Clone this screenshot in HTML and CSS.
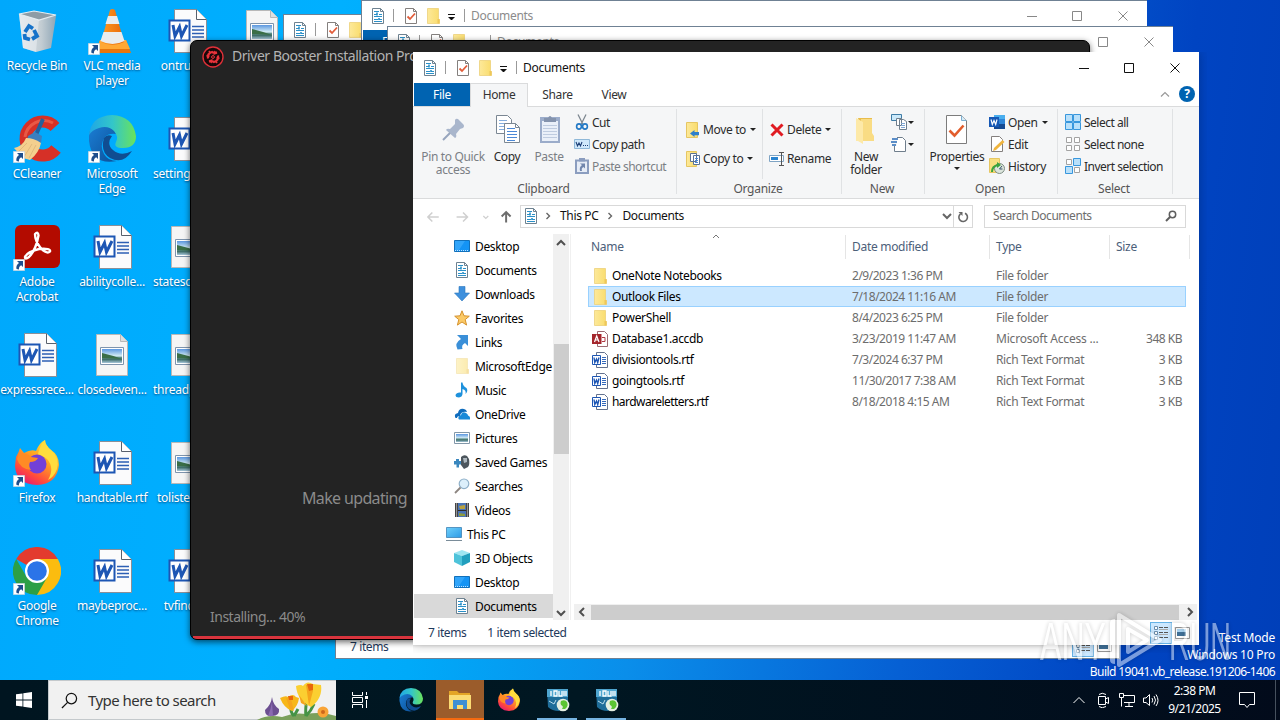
FILE: index.html
```html
<!DOCTYPE html>
<html lang="en">
<head>
	<meta charset="utf-8">
	<title>Desktop</title>
	<link rel="stylesheet" href="styles.css">
</head>
<body>
	<!-- icons -->
	<svg class="sprite" width="0" height="0">
		<defs>
			<linearGradient id="g-edge1" x1="0" y1="0" x2="1" y2="0"><stop offset="0" stop-color="#1fa6e6"/><stop offset=".5" stop-color="#33c6c9"/><stop offset="1" stop-color="#6be35a"/></linearGradient>
			<linearGradient id="g-edge2" x1="0" y1="0" x2="1" y2="1"><stop offset="0" stop-color="#1b7fd6"/><stop offset="1" stop-color="#0c4f97"/></linearGradient>
			<linearGradient id="g-fox" x1=".8" y1="0" x2=".2" y2="1"><stop offset="0" stop-color="#ffec3f"/><stop offset=".4" stop-color="#ffa422"/><stop offset=".75" stop-color="#ff4a3c"/><stop offset="1" stop-color="#e2137c"/></linearGradient>
			<linearGradient id="g-cone" x1="0" y1="0" x2="1" y2="0"><stop offset="0" stop-color="#ff9a20"/><stop offset="1" stop-color="#e8680a"/></linearGradient>
			<linearGradient id="g-bin" x1="0" y1="0" x2="1" y2="0"><stop offset="0" stop-color="#dfe5e8"/><stop offset=".6" stop-color="#c3cdd3"/><stop offset="1" stop-color="#8fa6b6"/></linearGradient>
			<linearGradient id="g-sky" x1="0" y1="0" x2="0" y2="1"><stop offset="0" stop-color="#5b97e0"/><stop offset=".5" stop-color="#d5edf5"/><stop offset=".6" stop-color="#5d8f8a"/><stop offset=".75" stop-color="#41706b"/><stop offset="1" stop-color="#a8c8dc"/></linearGradient>
			<linearGradient id="g-folder" x1="0" y1="0" x2="1" y2="0"><stop offset="0" stop-color="#fde99a"/><stop offset="1" stop-color="#f9dc6c"/></linearGradient>
			<linearGradient id="g-screen" x1="0" y1="0" x2="1" y2="1"><stop offset="0" stop-color="#6fd0fb"/><stop offset="1" stop-color="#2e9be6"/></linearGradient>
		</defs>
		<symbol id="i-shortcut" viewBox="0 0 12 12"><path fill="#fff" stroke="#b9c4d0" stroke-width=".6" d="M.3.3h11.4v11.4H.3z"/><path fill="#1f4e8c" d="M4 2h6v6L8.2 6.2Q5.5 7.5 6 10.5L3.5 10Q2.6 6.500 6 4.100z"/></symbol>
		<symbol id="i-bin" viewBox="0 0 48 48"><path fill="url(#g-bin)" d="M6 7l37 2-5 32-15 4-13-4z"/><path fill="#eef2f5" opacity=".5" d="M6 7l20 5-3 33-13-4z"/><path fill="#8d9ca6" stroke="#e4edf2" stroke-width="1.200" d="M6 7l15-3 22 4-17 5z"/><g fill="none" stroke="#1572c9" stroke-width="3.800"><path d="M12 25l4-6 4 2.500"/><path d="M21 23l3 6-5 3"/><path d="M17 32.500l-5-1.500-.5-4"/></g></symbol>
		<symbol id="i-vlc" viewBox="0 0 48 48"><path fill="#e8760c" d="M12 33h26l5 13H7z"/><path fill="#ffa834" d="M12 33h26l4 9H9z"/><path fill="url(#g-cone)" d="M22 3q2-2 5 0l9 32q-12 6-23 0z"/><path fill="#e9ecee" d="M20 9h9l2.500 8h-14zM15.500 25h18l3 9q-12 6-24 0z"/></symbol>
		<symbol id="i-ccleaner" viewBox="0 0 48 48"><path fill="none" stroke="#d63027" stroke-width="12" d="M42 12A17 17 0 1 0 43 34"/><path fill="none" stroke="#ef6a52" stroke-width="3" opacity=".7" d="M40 8A19 19 0 0 0 12 22"/><path stroke="#24609c" stroke-width="4" d="M30 4l-8 18"/><path fill="#3b7fbf" d="M15 21l7-4 7 4-1 7-14-2z"/><path fill="#f4cf8e" d="M13 23q8 0 15 5-2 10-11 17l-7-2-9-10q9-2 12-10z"/><path fill="none" stroke="#dcb277" stroke-width=".8" d="M14 28l-8 8M19 29l-8 13M23 30l-7 13"/></symbol>
		<symbol id="i-edge" viewBox="0 0 48 48"><path fill="url(#g-edge2)" d="M1 22Q1 8 14 9q12 1 14 10-7-1-11 3-6 8-1 17 4 7 13 7-25 5-28-20z"/><path fill="#104d91" d="M16 23q-4 14 6 20 13 7 22-7-11 6-19-1-7-6-1-14-5-2-8 2z"/><path fill="url(#g-edge1)" d="M1 20Q3 1 24 0q21 1 24 21 0 12-13 12-10 0-7-6 3-5-2-11-6-6-15-3Q4 15 1 20z"/></symbol>
		<symbol id="i-word" viewBox="0 0 48 48"><path fill="#fbfbfc" stroke="#8a8f98" d="M11.500 2.500h22l10 10v33h-32z"/><path fill="#fff" stroke="#59606c" d="M33.500 2.500v10h10"/><path stroke="#2d5fb4" stroke-width="1.300" d="M29 19.500h12M29 23h12M29 26.500h12M29 30h12"/><path fill="#fff" stroke="#1d56b4" stroke-width="2" d="M6.500 13.500h20v20h-20z"/><path fill="none" stroke="#1d56b4" stroke-width="3" d="M10 18l2 11 4.500-9 2 9L24 18"/></symbol>
		<symbol id="i-image" viewBox="0 0 48 48"><path fill="#f5f5f5" stroke="#b8b8b8" d="M8.500 3.500h24l7 7v34h-31z"/><path fill="#dfdfdf" stroke="#b8b8b8" d="M32.500 3.500v7h7"/><path fill="#fff" stroke="#7e94ad" d="M12.500 16.500h23v17h-23z"/><path fill="url(#g-sky)" d="M14 18h20v14H14z"/><path fill="#3a6e47" d="M14 22q9 2 20 6l-20-1z"/></symbol>
		<symbol id="i-acrobat" viewBox="0 0 48 48"><rect x="2" y="2" width="45" height="43" rx="6" fill="#b30b00"/><path fill="none" stroke="#fff" stroke-width="2.400" stroke-linejoin="round" d="M22 11q3-3 3.500 1.500Q23 27 16 34q-4 3-4 0 2-5 14-8 12-1 11 2.500-3 3-9-3Q22 18 22 11z"/></symbol>
		<symbol id="i-firefox" viewBox="0 0 48 48"><path fill="url(#g-fox)" d="M3 18q3-5 4-9l4 5q7-4 12-2 3-8 9-11 0 5 6 10 8 5 8 15-2 19-22 20Q3 45 2 27z"/><circle cx="24" cy="25" r="9.500" fill="#7240d8"/><path fill="#ff8b25" d="M6 14q9 0 12 4l7 1q-2 4-8 4-2 4 1 8-11-1-14-11z"/><path fill="#ffdc3d" d="M32 1q0 5 6 10 9 8 6 19-3 8-9 11 7-12-1-21-5-4-9-5 2-9 7-14z"/></symbol>
		<symbol id="i-chrome" viewBox="0 0 48 48"><path fill="#e33b2e" d="M24 24L3.200 12A24 24 0 0 1 44.800 12z"/><path fill="#fbbc0f" d="M24 24V12h20.800A24 24 0 0 1 24 48z"/><path fill="#2c9f46" d="M34.400 30L24 48A24 24 0 0 1 3.200 12L13.600 30z"/><circle cx="24" cy="24" r="12" fill="#fff"/><circle cx="24" cy="24" r="9.800" fill="#2b74e8"/></symbol>
		<symbol id="i-doc" viewBox="0 0 16 16"><path fill="#fff" stroke="#6e8291" d="M2.500.5h8l3 3v12h-11z"/><path fill="none" stroke="#6e8291" d="M10.500.5v3h3"/><path stroke="#2a90c8" d="M4 3.500h5M4 6.500h3M9 6.500h3M4 8.500h8M4 11.500h4M9 11.500h3M4 13.500h8"/><path stroke="#2a90c8" stroke-width="1.600" d="M7 4.500v3M9 10v2"/></symbol>
		<symbol id="i-check" viewBox="0 0 16 16"><path fill="#fff" stroke="#84807e" d="M2.500.5h8l3 3v12h-11z"/><path fill="none" stroke="#84807e" d="M10.500.5v3h3"/><path fill="none" stroke="#e25d3a" stroke-width="1.800" d="M4.500 8.500L7 11l5-5.500"/></symbol>
		<symbol id="i-folder" viewBox="0 0 16 16"><path fill="url(#g-folder)" stroke="#ecd07a" stroke-width=".8" d="M2.500.5h11v11h1v4h-12z"/><path fill="#eec75a" d="M12.500 11h2v4.500h-2z"/></symbol>
		<symbol id="i-desktop" viewBox="0 0 16 16"><path fill="#1494f5" stroke="#1170ba" d="M.5 2.500h15v11H.5z"/><path fill="#4db5ff" d="M1 3h10L5 12H1z" opacity=".5"/><path stroke="#bfe2ff" stroke-dasharray="1 1" d="M1 12.500h14"/></symbol>
		<symbol id="i-download" viewBox="0 0 16 16"><path fill="#3e90dd" stroke="#2876bd" stroke-width=".6" d="M5 .5h6v6.500h4.500L8 15 .5 7H5z"/></symbol>
		<symbol id="i-star" viewBox="0 0 16 16"><path fill="#fbca67" stroke="#d5922e" d="M8 .8l2 5 5.300.4-4.100 3.400 1.400 5.500L8 12l-4.600 3.100 1.400-5.500L.7 6.200 6 5.800z"/></symbol>
		<symbol id="i-link" viewBox="0 0 16 16"><path fill="#3a8fd8" d="M3 1h11v11l-3-3q-4 2-2.500 6l-5 .5Q0 9 7 5z"/></symbol>
		<symbol id="i-music" viewBox="0 0 16 16"><path fill="#1e91dc" d="M7 .5h1.500Q9 4 12.500 6q2 3-1 6 1-4-3-5v5q-.3 3-3.500 3.500-3.500 0-3.500-2.500 1-3 5.500-2.500z"/></symbol>
		<symbol id="i-onedrive" viewBox="0 0 16 16"><path fill="#0f6cbd" d="M1.500 12Q-.5 8 4 7q1-5 6-4 2.500.5 3 3-6-1-7 4-3 0-3 2z"/><path fill="#1a8ad8" d="M5 13.500q-2-3 2-4.500 1-4 5-2 2 1 2 2.500 2.500.5 2 4z"/></symbol>
		<symbol id="i-picture" viewBox="0 0 16 16"><path fill="#fff" stroke="#8297a9" d="M.5 2.500h15v11H.5z"/><path fill="url(#g-sky)" d="M2 4h12v8H2z"/></symbol>
		<symbol id="i-games" viewBox="0 0 16 16"><path fill="#4d565d" d="M7 3q3-3 6-1l2 3q1 5-1 8l-4 2-3-4z"/><path fill="#aeb8bf" d="M9 4l4 0v4l-3 1z"/><path fill="#3a87be" d="M2 5h3v2h2v3.500H5v3H2.500v-3H0V7h2z"/></symbol>
		<symbol id="i-search" viewBox="0 0 16 16"><circle cx="10" cy="5.800" r="4.800" fill="#dceffb" stroke="#8fb0c9" stroke-width="1.200"/><path stroke="#8d8580" stroke-width="1.800" d="M6.500 9.500L1 15"/></symbol>
		<symbol id="i-video" viewBox="0 0 16 16"><path fill="#2b2b2b" d="M1 1h14v14H1z"/><path fill="#4a74b6" d="M4 1h8v7H4z"/><path fill="#b9a13f" d="M5 4l6-1v4H6z"/><path fill="#4a74b6" d="M4 9h8v6H4z"/><path fill="#8f9b3d" d="M5 11l6 1v2H5z"/><path stroke="#fff" stroke-width="1.500" stroke-dasharray="1 1" d="M2.500 1.500V15M13.500 1.500V15"/></symbol>
		<symbol id="i-pc" viewBox="0 0 16 16"><path fill="url(#g-screen)" stroke="#3e82b4" stroke-width=".8" d="M.5 1.500h15v10H.5z"/><path stroke="#7a8c99" d="M0 14.500h16"/></symbol>
		<symbol id="i-cube" viewBox="0 0 16 16"><path fill="#9fe6f2" d="M8 0l8 3-8 3-8-3z"/><path fill="#4ec3da" d="M0 3l8 3v10l-8-4z"/><path fill="#219fbe" d="M16 3L8 6v10l8-4z"/></symbol>
		<symbol id="i-access" viewBox="0 0 16 16"><path fill="#fff" stroke="#9c6b73" d="M5.500.5h7l3 3v12h-10z"/><path fill="none" stroke="#b03a45" d="M10 6.500h3v4h-3"/><path fill="#a4262c" d="M0 3h9.500v10H0z"/><path fill="none" stroke="#fff" stroke-width="1.200" d="M2.500 11l2.200-6 2.300 6M3.500 9h3"/></symbol>
		<symbol id="i-rtf" viewBox="0 0 16 16"><path fill="#fff" stroke="#64728e" d="M4.500.5h8l3 3v12h-11z"/><path stroke="#3569bb" d="M10 5.500h4M10 7.500h4M10 9.500h4M10 11.500h4"/><path fill="#fff" stroke="#1d56b4" d="M.5 3.500h8v9h-8z"/><path fill="none" stroke="#1d56b4" stroke-width="1.400" d="M2 5.500l.8 5L4.500 7l1.200 3.500 1.300-5"/></symbol>
		<symbol id="i-pin" viewBox="0 0 32 32"><path fill="#a9b6cc" d="M18 5q1-2 3-1l5 5q2 2 0 4l-3 1-4 5q1 3-1 4l-9-8q1-2 4-1l5-5z"/><path stroke="#97a5bd" stroke-width="2" d="M13 18l-7 7"/></symbol>
		<symbol id="i-copy" viewBox="0 0 32 32"><path fill="#fff" stroke="#7b8793" d="M5.500.5h11l4 4v14h-15z"/><path stroke="#85aede" d="M8 5.500h8M8 8.500h10M8 11.500h10M8 14.500h10"/><path fill="#fff" stroke="#7b8793" d="M13.500 8.500h11l4 4v15h-15z"/><path fill="none" stroke="#7b8793" d="M24.500 8.500v4h4"/><path stroke="#4b88d6" d="M16 13.500h8M16 16.500h10M16 19.500h10M16 22.500h10M16 25.500h8"/></symbol>
		<symbol id="i-paste" viewBox="0 0 32 32"><path fill="#9bacca" d="M7 2h20v26H7z"/><path fill="#eaf0f9" d="M9 6h16v20H9z"/><path stroke="#bfcce0" d="M10 10.500h14M10 13.500h14M10 16.500h14M10 19.500h14M10 22.500h14"/><path fill="#8493ad" d="M11 3h4q2-4 4 0h4v4H11z"/></symbol>
		<symbol id="i-cut" viewBox="0 0 16 16"><path stroke="#7d8790" stroke-width="1.300" d="M4 .5l5 10M12 .5l-5 10"/><g fill="none" stroke="#2379c5" stroke-width="1.600"><ellipse cx="5" cy="12.500" rx="2.400" ry="2.600"/><ellipse cx="11" cy="12.500" rx="2.400" ry="2.600"/></g></symbol>
		<symbol id="i-path" viewBox="0 0 16 16"><path fill="#cfe8fb" stroke="#8fb8d8" d="M.5 3.500h15v9H.5z"/><path fill="none" stroke="#1d3f77" stroke-width="1.100" d="M2 6l1.500 4L5 7l1.500 3L8 6M9 9.500h1M11 9.500h1M13 9.500h1"/></symbol>
		<symbol id="i-pasteshort" viewBox="0 0 16 16"><path fill="#e6ecf6" stroke="#8b9dbf" stroke-width="2" d="M2 2.500h12V15H2z"/><path fill="#8b9dbf" d="M5 0h6v3.500H5z"/><path fill="#7287ad" d="M6 5.500h5v5L9.500 9Q7 10 8 13H6q-1-4 2-6z"/></symbol>
		<symbol id="i-move" viewBox="0 0 16 16"><path fill="url(#g-folder)" stroke="#e6c662" d="M1.500.5h11v15h-11z"/><path fill="#2f7fc9" d="M5 11.500L9.500 8v2H14v3.200H9.500V15z"/></symbol>
		<symbol id="i-copyto" viewBox="0 0 16 16"><path fill="url(#g-folder)" stroke="#e6c662" d="M1.500.5h10v15h-10z"/><path fill="#fff" stroke="#5b7396" d="M5.500 2.500h6v8h-6zM8.500 4.500h6v9h-6z"/><path stroke="#4b88d6" d="M10 7.500h3M10 9.500h3M10 11.500h3"/></symbol>
		<symbol id="i-delete" viewBox="0 0 16 16"><path stroke="#e01b22" stroke-width="3" d="M2.500 2.500l11 11M13.500 2.500l-11 11"/></symbol>
		<symbol id="i-rename" viewBox="0 0 16 16"><path fill="#fff" stroke="#7fa4c4" d="M.5 4.500h14v6H.5z"/><path fill="#2a84d0" d="M2 6h7v3H2z"/><path fill="none" stroke="#555" d="M10 1.500h5M12.500 1.500v13M10 14.500h5"/></symbol>
		<symbol id="i-bigfolder" viewBox="0 0 32 32"><path fill="#e9bd4c" d="M8 3h14v20h-9z"/><path fill="#f9dc84" d="M11 4h11v14l2 3v5H11z"/><path fill="#fde9a8" d="M6 3l7 4v22l-5-3H6z"/></symbol>
		<symbol id="i-newitem" viewBox="0 0 16 16"><path fill="#cbe9fa" stroke="#3f7ca6" d="M.5.5h10v6H.5z"/><path fill="#fff" stroke="#6f7e8c" d="M5.500 4.500h5v7h-5zM8.500 5.500h4l3 2v8h-7z"/><path stroke="#7fa7d4" d="M10 9.500h4M10 11.500h4M10 13.500h4"/></symbol>
		<symbol id="i-easy" viewBox="0 0 16 16"><path fill="#fff" stroke="#6f7e8c" d="M3.500 1.500h8l3 3v11h-11z"/><path fill="#f5f6f7" d="M0 1h6v9H0z"/><path stroke="#2a6cb8" stroke-width="1.400" d="M1 3h6M0 6h6M1 9h4"/></symbol>
		<symbol id="i-props" viewBox="0 0 32 32"><path fill="#fff" stroke="#7c7c7c" d="M5.500.5h15l5 5v23h-20z"/><path fill="#d8ecf8" stroke="#7cafd0" d="M20.500.5v5h5"/><path fill="none" stroke="#e25d2c" stroke-width="2.600" d="M8.500 15.500l5 5 9-10"/></symbol>
		<symbol id="i-openword" viewBox="0 0 16 16"><path fill="#2f86d8" d="M5 1h11v14H5z"/><path fill="#4aaeee" d="M5 1h11v4H5z"/><path fill="#164b93" d="M5 10h11v5H5z"/><path fill="#1658b5" d="M0 3h10v10H0z"/><path fill="none" stroke="#fff" stroke-width="1.200" d="M2 5.500l1.300 5L5 6.500l1.700 4 1.300-5"/></symbol>
		<symbol id="i-edit" viewBox="0 0 16 16"><path fill="#fff" stroke="#84807e" d="M2.500.5h8l3 3v12h-11z"/><path fill="#f0b53e" d="M13.500 4l2 2-8.500 8-3 1 1-3z"/></symbol>
		<symbol id="i-history" viewBox="0 0 16 16"><path fill="#f7df80" stroke="#e6c662" d="M.5.5h10v14H.5z"/><circle cx="10.500" cy="10.500" r="5" fill="#dce5dc" stroke="#7d8d84"/><path fill="none" stroke="#3ba33b" stroke-width="2" d="M3 14q0-6 6-7"/><path fill="#3ba33b" d="M8 4l4 3-4 3z"/><path fill="none" stroke="#3a566c" d="M13 8l-2.500 3h3"/></symbol>
		<symbol id="i-selall" viewBox="0 0 16 16"><path fill="#b9e0fa" stroke="#3897dd" d="M.5.5h7v7h-7zM8.500.5h7v7h-7zM.5 8.500h7v7h-7zM8.500 8.500h7v7h-7z"/></symbol>
		<symbol id="i-selnone" viewBox="0 0 16 16"><path fill="#fff" stroke="#a3a3a3" d="M1.500 1.500h5v5h-5zM9.500 1.500h5v5h-5zM1.500 9.500h5v5h-5zM9.500 9.500h5v5h-5z"/></symbol>
		<symbol id="i-selinv" viewBox="0 0 16 16"><path fill="#fff" stroke="#a3a3a3" d="M1.500 1.500h5v5h-5zM9.500 9.500h5v5h-5z"/><path fill="#b9e0fa" stroke="#3897dd" d="M8.500.5h7v7h-7zM.5 8.500h7v7h-7z"/></symbol>
		<symbol id="i-details" viewBox="0 0 16 16"><path fill="#fff" stroke="#6c8fae" d="M1.500 1.500h3v3h-3zM1.500 6.500h3v3h-3zM1.500 11.500h3v3h-3z"/><path stroke="#555" stroke-dasharray="4 1" d="M6 2.500h9M6 7.500h9M6 12.500h9"/><path stroke="#aaa" d="M6 4.500h9M6 9.500h9"/></symbol>
		<symbol id="i-large" viewBox="0 0 16 16"><path fill="#fff" stroke="#999" d="M.5 2.500h14v11H.5z"/><path fill="#3f6f96" d="M2 5h9v6H2z"/><path fill="#a9d3f1" d="M2 4h9v3H2z"/></symbol>
		<symbol id="i-iobit" viewBox="0 0 24 24"><path fill="#1f6d99" d="M1 1h21v17l-9 5q-7 0-11-4z"/><path fill="#4fa5cf" d="M1 1h21v8H1z"/><path fill="none" stroke="#fff" stroke-width="1.300" d="M5 3v5M8 3h3v5H8zM13 3v5h3V3M18 3v5M20 3v5"/><path fill="none" stroke="#b9dcec" d="M3 13l5 3 2-4"/><circle cx="17" cy="17" r="6.300" fill="#e6efe2"/><path fill="#5cc534" d="M15 13q4-2 6 1 2 4-2 7l-3 0q2-3-1-4-1-2 0-4z"/></symbol>
		<symbol id="i-explorer" viewBox="0 0 24 24"><path fill="#e4a526" d="M1 3h8l2 2h11v5H1z"/><path fill="#fbdc74" d="M1 7h22v14H1z"/><path fill="#3f8fd3" d="M5 12h14v9h-4v-4H9v4H5z"/></symbol>
	</svg>

	<div class="desktop">
		<div class="icons">
			<div class="shortcut"><svg><use href="#i-bin"/></svg><span>Recycle Bin</span></div>
			<div class="shortcut"><svg><use href="#i-ccleaner"/></svg><svg class="arrow"><use href="#i-shortcut"/></svg><span>CCleaner</span></div>
			<div class="shortcut"><svg><use href="#i-acrobat"/></svg><svg class="arrow"><use href="#i-shortcut"/></svg><span>Adobe Acrobat</span></div>
			<div class="shortcut"><svg><use href="#i-word"/></svg><span>expressrece...</span></div>
			<div class="shortcut"><svg><use href="#i-firefox"/></svg><svg class="arrow"><use href="#i-shortcut"/></svg><span>Firefox</span></div>
			<div class="shortcut"><svg><use href="#i-chrome"/></svg><svg class="arrow"><use href="#i-shortcut"/></svg><span>Google Chrome</span></div>
			<div class="shortcut"><svg><use href="#i-vlc"/></svg><svg class="arrow"><use href="#i-shortcut"/></svg><span>VLC media player</span></div>
			<div class="shortcut"><svg><use href="#i-edge"/></svg><svg class="arrow"><use href="#i-shortcut"/></svg><span>Microsoft Edge</span></div>
			<div class="shortcut"><svg><use href="#i-word"/></svg><span>abilitycolle...</span></div>
			<div class="shortcut"><svg><use href="#i-image"/></svg><span>closedeven...</span></div>
			<div class="shortcut"><svg><use href="#i-word"/></svg><span>handtable.rtf</span></div>
			<div class="shortcut"><svg><use href="#i-word"/></svg><span>maybeproc...</span></div>
			<div class="shortcut"><svg><use href="#i-word"/></svg><span>ontrue.rtf</span></div>
			<div class="shortcut left"><svg><use href="#i-word"/></svg><span>settings.rtf</span></div>
			<div class="shortcut left"><svg><use href="#i-image"/></svg><span>statescar...</span></div>
			<div class="shortcut left"><svg><use href="#i-image"/></svg><span>threadp...</span></div>
			<div class="shortcut"><svg><use href="#i-image"/></svg><span>tolisten.jpg</span></div>
			<div class="shortcut"><svg><use href="#i-word"/></svg><span>tvfind.rtf</span></div>
			<div class="shortcut"><svg><use href="#i-image"/></svg></div>
		</div>

		<div class="build">
			<p>Test Mode</p>
			<p>Windows 10 Pro</p>
			<p>Build 19041.vb_release.191206-1406</p>
		</div>

		<!-- windows behind -->
		<div class="window back w1">
			<div class="titlebar">
				<svg class="ic"><use href="#i-doc"/></svg><i class="bar"></i><svg class="ic"><use href="#i-check"/></svg><svg class="ic"><use href="#i-folder"/></svg>
			</div>
		</div>
		<div class="window back w2">
			<div class="statusbar">
				<span>7 items</span>
				<div class="views"><b class="on"><svg class="ic"><use href="#i-details"/></svg></b><b><svg class="ic"><use href="#i-large"/></svg></b></div>
			</div>
		</div>
		<div class="window back w3">
			<div class="titlebar">
				<svg class="ic"><use href="#i-doc"/></svg><i class="bar"></i><svg class="ic"><use href="#i-check"/></svg><svg class="ic"><use href="#i-folder"/></svg><i class="qa"></i><i class="bar"></i><span>Documents</span>
				<svg class="controls" viewBox="0 0 138 30"><path d="M19 15.500h10M64.500 10.500h9v9h-9zM110.500 10.500l9 9M119.500 10.500l-9 9"/></svg>
			</div>
			<div class="tabs"><a class="file">File</a></div>
		</div>
		<div class="window back w4">
			<div class="titlebar">
				<svg class="ic"><use href="#i-doc"/></svg><i class="bar"></i><svg class="ic"><use href="#i-check"/></svg><svg class="ic"><use href="#i-folder"/></svg><i class="qa"></i><i class="bar"></i><span>Documents</span>
				<svg class="controls" viewBox="0 0 138 30"><path d="M19 15.500h10M64.500 10.500h9v9h-9zM110.500 10.500l9 9M119.500 10.500l-9 9"/></svg>
			</div>
		</div>

		<!-- installer -->
		<div class="installer">
			<div class="installer-title">
				<svg viewBox="0 0 22 22"><circle cx="11" cy="11" r="10" fill="#17090a" stroke="#e03038" stroke-width="1.400"/><path fill="none" stroke="#e8333b" stroke-width="2.200" d="M6 12.500q-1-5 4-6.500l2 1M16 9.500q1 5-4 6.500l-2-1"/><path stroke="#e8333b" stroke-width="1.800" d="M4.500 9.500l3 1M7 5l1.500 2M14.500 5.500l-1 2M17.500 12.500l-3-1M15 17l-1.500-2M7.500 16.500l1-2"/><path fill="#e8333b" d="M12 4.500l3.500 3-4 1.500zM10 17.500l-3.500-3 4-1.500z"/><circle cx="11" cy="11" r="1.400" fill="none" stroke="#e8333b"/></svg>
				<span>Driver Booster Installation Program</span>
			</div>
			<p class="slogan">Make updating</p>
			<p class="state">Installing... 40%</p>
			<div class="progress"><div class="done"></div></div>
		</div>

		<!-- explorer -->
		<div class="window main">
			<div class="titlebar">
				<svg class="ic"><use href="#i-doc"/></svg><i class="bar"></i><svg class="ic"><use href="#i-check"/></svg><svg class="ic"><use href="#i-folder"/></svg><i class="qa"></i><i class="bar"></i><span>Documents</span>
				<svg class="controls" viewBox="0 0 138 30"><path d="M19 15.500h10M64.500 10.500h9v9h-9zM110.500 10.500l9 9M119.500 10.500l-9 9"/></svg>
			</div>
			<div class="tabs">
				<a class="file">File</a><a class="active">Home</a><a>Share</a><a>View</a>
				<svg class="collapse" viewBox="0 0 10 10"><path d="M1 7l4-4 4 4"/></svg>
				<b class="help">?</b>
			</div>
			<div class="ribbon">
				<div class="group clipboard">
					<div class="tools">
						<a class="big off pin"><svg><use href="#i-pin"/></svg>Pin to Quick access</a>
						<a class="big copy"><svg><use href="#i-copy"/></svg>Copy</a>
						<a class="big off paste"><svg><use href="#i-paste"/></svg>Paste</a>
						<div class="stack">
							<a><svg class="ic"><use href="#i-cut"/></svg>Cut</a>
							<a><svg class="ic"><use href="#i-path"/></svg>Copy path</a>
							<a class="off"><svg class="ic"><use href="#i-pasteshort"/></svg>Paste shortcut</a>
						</div>
					</div>
					<h3>Clipboard</h3>
				</div>
				<div class="group organize">
					<div class="tools">
						<div class="stack wide first">
							<a><svg class="ic"><use href="#i-move"/></svg>Move to<i class="drop"></i></a>
							<a><svg class="ic"><use href="#i-copyto"/></svg>Copy to<i class="drop"></i></a>
						</div>
						<div class="stack wide second">
							<a><svg class="ic"><use href="#i-delete"/></svg>Delete<i class="drop"></i></a>
							<a><svg class="ic"><use href="#i-rename"/></svg>Rename</a>
						</div>
					</div>
					<h3>Organize</h3>
				</div>
				<div class="group new">
					<div class="tools">
						<a class="big folder"><svg><use href="#i-bigfolder"/></svg>New folder</a>
						<div class="stack">
							<a><svg class="ic"><use href="#i-newitem"/></svg><i class="drop"></i></a>
							<a><svg class="ic"><use href="#i-easy"/></svg><i class="drop"></i></a>
						</div>
					</div>
					<h3>New</h3>
				</div>
				<div class="group open">
					<div class="tools">
						<a class="big props"><svg><use href="#i-props"/></svg>Properties<i class="drop"></i></a>
						<div class="stack">
							<a><svg class="ic"><use href="#i-openword"/></svg>Open<i class="drop"></i></a>
							<a><svg class="ic"><use href="#i-edit"/></svg>Edit</a>
							<a><svg class="ic"><use href="#i-history"/></svg>History</a>
						</div>
					</div>
					<h3>Open</h3>
				</div>
				<div class="group select">
					<div class="tools">
						<div class="stack">
							<a><svg class="ic"><use href="#i-selall"/></svg>Select all</a>
							<a><svg class="ic"><use href="#i-selnone"/></svg>Select none</a>
							<a><svg class="ic"><use href="#i-selinv"/></svg>Invert selection</a>
						</div>
					</div>
					<h3>Select</h3>
				</div>
			</div>
			<div class="navbar">
				<svg class="arrows" viewBox="0 0 106 22"><g fill="none" stroke-width="1.500"><path stroke="#cfcfcf" d="M25 11H14M18.500 6.500L14 11l4.500 4.500M43 11h11M49.500 6.500L54 11l-4.500 4.500"/><path stroke="#cfcfcf" stroke-width="1.200" d="M70 10l2.500 2.500L75 10"/><path stroke="#6d6d6d" stroke-width="2" d="M93 16.500V6M88.500 10.500L93 6l4.500 4.500"/></g></svg>
				<div class="address">
					<svg class="ic"><use href="#i-doc"/></svg>
					<svg class="chev" viewBox="0 0 8 8"><path d="M2.500 1L5.500 4l-3 3"/></svg><span>This PC</span>
					<svg class="chev" viewBox="0 0 8 8"><path d="M2.500 1L5.500 4l-3 3"/></svg><span>Documents</span>
					<svg class="chev down" viewBox="0 0 10 8"><path d="M1 2l4 4 4-4"/></svg>
					<div class="refresh"><svg viewBox="0 0 12 12"><path fill="none" stroke="#666" stroke-width="1.600" d="M3.500 2.800A4.300 4.300 0 1 0 8 2.300"/><path fill="#666" d="M1.500 1h4v4z"/></svg></div>
				</div>
				<div class="search"><span>Search Documents</span><svg viewBox="0 0 12 12"><g fill="none" stroke="#5e5e5e"><circle cx="7.500" cy="4.500" r="3.200" stroke-width="1.500"/><path stroke-width="2" d="M5 7L1 11"/></g></svg></div>
			</div>
			<div class="content">
				<div class="tree">
					<a><svg class="ic"><use href="#i-desktop"/></svg>Desktop</a>
					<a><svg class="ic"><use href="#i-doc"/></svg>Documents</a>
					<a><svg class="ic"><use href="#i-download"/></svg>Downloads</a>
					<a><svg class="ic"><use href="#i-star"/></svg>Favorites</a>
					<a><svg class="ic"><use href="#i-link"/></svg>Links</a>
					<a><svg class="ic pale"><use href="#i-folder"/></svg>MicrosoftEdge</a>
					<a><svg class="ic"><use href="#i-music"/></svg>Music</a>
					<a><svg class="ic"><use href="#i-onedrive"/></svg>OneDrive</a>
					<a><svg class="ic"><use href="#i-picture"/></svg>Pictures</a>
					<a><svg class="ic"><use href="#i-games"/></svg>Saved Games</a>
					<a><svg class="ic"><use href="#i-search"/></svg>Searches</a>
					<a><svg class="ic"><use href="#i-video"/></svg>Videos</a>
					<a class="root"><svg class="ic"><use href="#i-pc"/></svg>This PC</a>
					<a><svg class="ic"><use href="#i-cube"/></svg>3D Objects</a>
					<a><svg class="ic"><use href="#i-desktop"/></svg>Desktop</a>
					<a class="current"><svg class="ic"><use href="#i-doc"/></svg>Documents</a>
				</div>
				<div class="vscroll">
					<svg viewBox="0 0 10 8"><path d="M1 6l4-4 4 4"/></svg>
					<div class="thumb"></div>
					<svg viewBox="0 0 10 8"><path d="M1 2l4 4 4-4"/></svg>
				</div>
				<div class="files">
					<div class="row head"><span>Name<svg class="sort" viewBox="0 0 8 5"><path d="M1 4l3-3 3 3"/></svg></span><span>Date modified</span><span>Type</span><span>Size</span></div>
					<div class="row"><span><svg class="ic"><use href="#i-folder"/></svg>OneNote Notebooks</span><span>2/9/2023 1:36 PM</span><span>File folder</span><span></span></div>
					<div class="row selected"><span><svg class="ic"><use href="#i-folder"/></svg>Outlook Files</span><span>7/18/2024 11:16 AM</span><span>File folder</span><span></span></div>
					<div class="row"><span><svg class="ic"><use href="#i-folder"/></svg>PowerShell</span><span>8/4/2023 6:25 PM</span><span>File folder</span><span></span></div>
					<div class="row"><span><svg class="ic"><use href="#i-access"/></svg>Database1.accdb</span><span>3/23/2019 11:47 AM</span><span class="long">Microsoft Access ...</span><span>348 KB</span></div>
					<div class="row"><span><svg class="ic"><use href="#i-rtf"/></svg>divisiontools.rtf</span><span>7/3/2024 6:37 PM</span><span>Rich Text Format</span><span>3 KB</span></div>
					<div class="row"><span><svg class="ic"><use href="#i-rtf"/></svg>goingtools.rtf</span><span>11/30/2017 7:38 AM</span><span>Rich Text Format</span><span>3 KB</span></div>
					<div class="row"><span class="tight"><svg class="ic"><use href="#i-rtf"/></svg>hardwareletters.rtf</span><span>8/18/2018 4:15 AM</span><span>Rich Text Format</span><span>3 KB</span></div>
					<div class="hscroll">
						<svg viewBox="0 0 8 10"><path d="M6 1L2 5l4 4"/></svg>
						<div class="thumb"></div>
						<svg viewBox="0 0 8 10"><path d="M2 1l4 4-4 4"/></svg>
					</div>
				</div>
			</div>
			<div class="statusbar">
				<span>7 items</span><span>1 item selected</span>
				<div class="views"><b class="on"><svg class="ic"><use href="#i-details"/></svg></b><b><svg class="ic"><use href="#i-large"/></svg></b></div>
			</div>
		</div>

		<svg class="watermark" viewBox="0 0 194 64">
			<text x="1" y="53" textLength="66" lengthAdjust="spacingAndGlyphs">ANY</text>
			<text x="130" y="53" textLength="62" lengthAdjust="spacingAndGlyphs">RUN</text>
			<path d="M71 16q0-4 5-4v45q-5 0-5-4z"/>
			<path class="outline" d="M80 8v50l41-25z"/>
			<path class="outline" d="M89 22v23l19-12z"/>
		</svg>
	</div>

	<div class="taskbar">
		<div class="start"><svg viewBox="0 0 16 16"><path fill="#fff" d="M0 2.300l6.500-.9v6.200H0zM7.300 1.300L16 0v7.600H7.300zM0 8.400h6.500v6.200L0 13.700zM7.300 8.400H16V16l-8.700-1.300z"/></svg></div>
		<div class="searchbox">
			<svg class="lens" viewBox="0 0 18 18"><g fill="none" stroke="#111" stroke-width="1.300"><circle cx="11" cy="7" r="5.500"/><path d="M7 11L1 17"/></g></svg>
			<span>Type here to search</span>
			<svg class="flowers" viewBox="0 0 80 40"><path fill="#7ba05b" d="M1 40q11-6 25-3 12-5 24-3 16-3 30 2v4z"/><path fill="none" stroke="#459345" stroke-width="3" d="M35 26q-1 6 3 10M51 18q-2 12-1 18M58 24q-3 7-8 12M42 29l-4 7"/><path fill="#6c4f91" d="M16 17q-1 8-7 13 0 7 7 6 8 0 7-7-6-4-7-12z"/><path fill="#8b6bb1" d="M16 22q-1 7-4 14h5z"/><path fill="#f7b718" d="M24 18q6-3 8-1 5-4 8 0l3 1q-1 8-7 13-8-3-12-13z"/><path fill="#fbcf31" d="M40 6q5-2 7 0 4-6 10-2l8 1q2 13-10 22-14-7-15-21z"/><path fill="#f5a51b" d="M30 18l5 1 3 12-4-2zM50 5l6-1 1 7-4 15zM43 15l8 11-6-3z"/><path fill="#e8650b" d="M51 4h6v6l-4 1zM32 16h5v4h-4z"/><circle cx="67" cy="32" r="5.500" fill="#f9a436"/><circle cx="67" cy="32" r="2" fill="#ce671c"/></svg>
		</div>
		<div class="task first"><svg class="tv" viewBox="0 0 16 16"><path fill="none" stroke="#fff" d="M.5 0v3.500h10V0M.5 5.500h10v5H.5zM.5 16v-3.500h10V16M14.500 0v3M14.500 8v8"/><path fill="#fff" d="M13 4h3v3h-3z"/></svg></div>
		<div class="task"><svg><use href="#i-edge"/></svg></div>
		<div class="task lit"><svg><use href="#i-explorer"/></svg></div>
		<div class="task"><svg><use href="#i-firefox"/></svg></div>
		<div class="task running"><svg><use href="#i-iobit"/></svg></div>
		<div class="task running"><svg><use href="#i-iobit"/></svg></div>
		<div class="tray">
			<svg viewBox="0 0 16 16"><path d="M2.500 11L8 5.500l5.500 5.500"/></svg>
			<svg viewBox="0 0 16 16"><path d="M3.500 4.500h7v8h-7zM10.500 7l3-1.500v6l-3-1.500M4 2.500q3-2.500 7 0M4 14.500q3 2.500 7 0"/></svg>
			<svg viewBox="0 0 16 16"><path d="M5 3.500h10.500v7H5M10 10.500v4M6 14.500h8M.5 1.500h4v4h-4zM2.500 5.500v9"/></svg>
			<svg viewBox="0 0 16 16"><path d="M.5 6v4.500H3l3.500 3v-11L3 6zM9 6q1.500 2 0 4.500M11 4q3 4 0 8.500M13 2.500q4 6 0 11.500"/></svg>
			<div class="clock">2:38 PM<br>9/21/2025</div>
			<svg class="note" viewBox="0 0 18 18"><path d="M1.500 1.500h15v12h-5L9 16.500l-2.500-3h-5z"/></svg>
			<i></i>
		</div>
	</div>
</body>
</html>
```
FILE: styles.css
```css
* {
	box-sizing: border-box;
}

body {
	margin: 0;
	width: 1280px;
	height: 720px;
	overflow: hidden;
	font-family: "Noto Sans", "Open Sans", sans-serif;
	font-size: 12px;
	letter-spacing: -.35px;
	color: #111;
	white-space: nowrap;
}

p, h3 {
	margin: 0;
	font-weight: 400;
}

.sprite {
	position: absolute;
}

.ic {
	width: 16px;
	height: 16px;
	flex: none;
}

.desktop {
	position: relative;
	height: 680px;
	overflow: hidden;
	background: linear-gradient(97deg, #00a8fc 0%, #00b0ff 25%, #00aaf9 36%, #0a8eea 52%, #0660d4 72%, #0044c2 88%, #003fb9 100%);
}

/* desktop icons */
.icons {
	display: grid;
	grid-auto-flow: column;
	grid-template-rows: repeat(6, 108px);
	grid-auto-columns: 75px;
	padding-top: 7px;
}

.shortcut {
	display: flex;
	flex-direction: column;
	align-items: center;
	position: relative;
	white-space: normal;
	text-align: center;
	color: #fff;
	line-height: 15px;
	letter-spacing: -.25px;
	text-shadow: 0 1px 2px rgba(0, 40, 90, .7);
}

.shortcut svg {
	width: 48px;
	height: 48px;
	margin: 0 1px 3px 0;
	flex: none;
}

.shortcut span {
	padding: 0 3px 0 2px;
}

.shortcut.left span {
	align-self: flex-start;
	padding-left: 3px;
}

.shortcut .arrow {
	position: absolute;
	left: 13px;
	top: 36px;
	width: 12px;
	height: 12px;
}

.build {
	position: absolute;
	right: 5px;
	top: 629px;
	text-align: right;
	color: #fff;
	line-height: 17px;
	letter-spacing: -.2px;
}

.build p:last-child {
	letter-spacing: -.57px;
}

/* windows */
.window {
	position: absolute;
	width: 785px;
	height: 593px;
	display: flex;
	flex-direction: column;
	background: #fff;
}

.back {
	border: 1px solid #6f8194;
}

.w1 { left: 283px; top: 14px; }
.w2 { left: 335px; top: 66px; justify-content: flex-end; }
.w3 { left: 361px; top: 0; width: 786px; }
.w4 { left: 387px; top: 26px; width: 786px; }
.w3, .w4 {
	border-right: 0;
	padding-right: 1px;
}
.main {
	left: 413px;
	top: 52px;
	width: 786px;
	box-shadow: 0 0 10px rgba(0, 0, 0, .25);
	clip-path: inset(0 -8px -8px 0);
}

.titlebar {
	display: flex;
	align-items: center;
	height: 31px;
	padding: 0 1px 0 9px;
	flex: none;
}

.back .titlebar {
	height: 29px;
	padding: 0 0 0 8px;
	color: #8b8b8b;
}

.titlebar .bar {
	width: 1px;
	height: 13px;
	margin: 0 9px 0 7px;
	background: #999;
}

.titlebar .ic + .ic {
	margin-left: 6px;
}

.qa {
	width: 7px;
	height: 7px;
	margin-left: 7px;
	border-top: 1px solid #111;
	position: relative;
	top: 2px;
}

.qa::after {
	content: "";
	display: block;
	margin-top: 2px;
	border: 3.500px solid transparent;
	border-top-color: #111;
}

.titlebar .qa + .bar {
	margin: 0 6px 0 9px;
}

.titlebar span {
	letter-spacing: -.3px;
}

.controls {
	width: 138px;
	height: 30px;
	margin-left: auto;
	fill: none;
	stroke: #111;
}

.back .controls {
	stroke: #888;
}

.tabs {
	display: flex;
	height: 23px;
	line-height: 24px;
	padding-left: 1px;
	flex: none;
	color: #333;
}

.tabs a {
	width: 56px;
	text-align: center;
}

.tabs a.file {
	background: #0063b1;
	color: #fff;
}

.tabs a.active {
	position: relative;
	height: 24px;
	line-height: 22px;
	width: 58px;
	background: #f5f6f7;
	border: 1px solid #dadbdc;
	border-bottom: 0;
}

.tabs a + a + a {
	width: 59px;
}

.tabs a:nth-child(4) {
	width: 54px;
}

.collapse {
	width: 10px;
	margin-left: auto;
	margin-right: 9px;
	fill: none;
	stroke: #999;
	stroke-width: 1.200;
}

.help {
	width: 16px;
	height: 16px;
	margin: 3px 4px 0 0;
	border-radius: 50%;
	background: #0063b1;
	color: #fff;
	line-height: 16px;
	text-align: center;
}

.ribbon {
	display: flex;
	height: 93px;
	background: #f5f6f7;
	border-top: 1px solid #dadbdc;
	border-bottom: 1px solid #dadbdc;
	flex: none;
	color: #2b2b2b;
}

.group {
	display: flex;
	flex-direction: column;
	border-right: 1px solid #e0e2e4;
	margin: 2px 0 4px;
}

.clipboard { width: 264px; }
.organize { width: 165px; }
.new { width: 83px; }
.open { width: 133px; }
.select { width: 115px; }

.group h3 {
	margin: auto 0 -3px;
	padding-right: 2px;
	text-align: center;
	font-size: 12px;
	line-height: 16px;
	letter-spacing: -.25px;
	color: #555;
}

.tools {
	display: flex;
	height: 70px;
	flex: none;
}

.big {
	display: flex;
	flex-direction: column;
	align-items: center;
	padding-top: 6px;
	line-height: 13px;
	white-space: normal;
	text-align: center;
}

.big svg {
	width: 32px;
	height: 32px;
	margin-bottom: 3px;
	flex: none;
}

.off {
	color: #7b7f85;
}

.pin { width: 66px; margin-left: 7px; }
.copy { width: 42px; }
.paste { width: 42px; }
.folder { width: 44px; margin-left: 2px; }
.props { width: 56px; margin-left: 4px; }

.stack {
	display: flex;
	flex-direction: column;
	padding: 2px 0 0 4px;
}

.stack a {
	display: flex;
	align-items: center;
	height: 22px;
}

.stack .ic {
	margin-right: 3px;
}

.clipboard .stack, .select .stack {
	letter-spacing: -.5px;
}

.clipboard .stack .ic {
	margin-right: 2px;
}

.select .stack {
	padding-left: 7px;
}

.stack.wide {
	padding: 6px 0 0 8px;
}

.stack.wide a {
	height: 29px;
}

.stack.wide .ic {
	margin-right: 2px;
}

.stack.first {
	width: 85px;
}

.stack.second {
	border-left: 1px solid #e0e2e4;
	padding-left: 6px;
}

.drop {
	margin-left: 5px;
	border: 3px solid transparent;
	border-top-color: #222;
	border-bottom: 0;
}

.wide .drop, .open .stack .drop {
	margin-left: 4px;
}

.new .drop {
	margin-left: -2px;
}

.new .stack {
	padding-left: 3px;
}

.big .drop {
	margin: 4px 0 0;
}

/* address bar */
.navbar {
	display: flex;
	align-items: center;
	height: 35px;
	padding: 0 13px 0 0;
	flex: none;
}

.arrows {
	width: 106px;
	height: 22px;
	padding-left: 1px;
}

.address, .search {
	display: flex;
	align-items: center;
	height: 23px;
	border: 1px solid #d9d9d9;
	line-height: 20px;
	padding-bottom: 1px;
}

.address {
	width: 453px;
	padding-left: 2px;
	margin-left: 1px;
}

.chev {
	width: 8px;
	height: 8px;
	margin: 0 8px 0 5px;
	fill: none;
	stroke: #666;
	stroke-width: 1.400;
}

.address span + .chev {
	margin-left: 8px;
}

.address .down {
	width: 10px;
	margin: 0 1px 0 auto;
	stroke-width: 2;
}

.address span + .down {
	margin-left: auto;
}

.refresh {
	width: 19px;
	height: 21px;
	padding: 5px 3px;
	border-left: 1px solid #d9d9d9;
	margin-bottom: -1px;
}

.refresh svg, .search svg {
	width: 12px;
	height: 12px;
	display: block;
}

.search {
	width: 202px;
	margin-left: auto;
	justify-content: space-between;
	padding: 0 8px 1px;
	color: #6d6d6d;
	letter-spacing: -.45px;
}

.content {
	display: flex;
	flex: 1;
	min-height: 0;
}

.tree {
	width: 140px;
	overflow: hidden;
	padding-left: 1px;
	color: #000;
	letter-spacing: -.35px;
}

.tree a {
	display: flex;
	align-items: center;
	gap: 5px;
	height: 24px;
	padding-left: 40px;
}

.tree a.root {
	padding-left: 32px;
}

.tree a.current {
	background: #d9d9d9;
}

.pale {
	opacity: .55;
}

.vscroll {
	width: 17px;
	display: flex;
	flex-direction: column;
	align-items: center;
	justify-content: space-between;
	padding: 5px 1px 3px 0;
	background: linear-gradient(90deg, #f0f0f0 16px, #fff 16px);
}

.vscroll svg, .hscroll svg {
	width: 10px;
	height: 8px;
	fill: none;
	stroke: #505050;
	stroke-width: 2;
}

.vscroll .thumb {
	width: 15px;
	height: 110px;
	margin-bottom: 59px;
	background: #cdcdcd;
}

.files {
	flex: 1;
	display: flex;
	flex-direction: column;
	padding-left: 4px;
	border-left: 1px solid #f0f0f0;
}

.row {
	display: grid;
	grid-template-columns: 257px 144px 120px 75px;
	align-items: center;
	height: 21px;
	width: 598px;
	margin-left: 13px;
	border: 1px solid transparent;
	color: #6d6d6d;
}

.row span {
	padding-left: 6px;
}

.row span:first-child {
	display: flex;
	align-items: center;
	gap: 4px;
	padding-left: 3px;
	color: #000;
}

.row:not(.head) span:nth-child(2) {
	letter-spacing: -.48px;
}

.row span.long {
	letter-spacing: -.2px;
}

.row span.tight {
	letter-spacing: -.55px;
}

.row:not(.head) span:last-child {
	text-align: right;
	padding-right: 3px;
	letter-spacing: -.5px;
}

.row.selected {
	background: #cce8ff;
	border-color: #99d1ff;
}

.row.head {
	height: 26px;
	margin-bottom: 5px;
	width: 604px;
	grid-template-columns: 257px 144px 120px 80px;
	align-items: stretch;
	line-height: 24px;
	letter-spacing: -.3px;
}

.row.head span {
	position: relative;
	display: block;
	color: #4c607a;
	border-right: 1px solid #e5e5e5;
}

.row.head span:first-child {
	padding-left: 2px;
}

.sort {
	position: absolute;
	left: 123px;
	top: -1px;
	width: 8px;
	height: 5px;
	fill: none;
	stroke: #777;
}

.hscroll {
	display: flex;
	align-items: center;
	justify-content: space-between;
	height: 16px;
	margin: auto 2px 0 -1px;
	padding: 0 3px 0 4px;
	background: #f0f0f0;
}

.hscroll svg {
	width: 8px;
	height: 10px;
}

.hscroll .thumb {
	width: 588px;
	height: 15px;
	margin-right: 2px;
	background: #cdcdcd;
}

.statusbar {
	display: flex;
	align-items: center;
	gap: 21px;
	height: 25px;
	padding: 0 5px 0 15px;
	flex: none;
	color: #1e395b;
	letter-spacing: -.4px;
}

.back .statusbar {
	height: 24px;
	padding: 0 3px 0 14px;
}

.views {
	display: flex;
	margin-left: auto;
}

.views b {
	width: 22px;
	height: 22px;
	padding: 2px;
	border: 1px solid transparent;
}

.views .on {
	background: #cce8ff;
	border-color: #66b2e6;
}

/* installer */
.installer {
	position: absolute;
	left: 190px;
	top: 40px;
	width: 900px;
	height: 600px;
	display: flex;
	flex-direction: column;
	background: #232323;
	border: 1px solid #000;
	border-radius: 7px;
	box-shadow: 0 2px 6px rgba(0, 0, 0, .6);
	overflow: hidden;
	letter-spacing: -.5px;
	color: #8b8b8b;
}

.installer-title {
	display: flex;
	align-items: center;
	gap: 8px;
	height: 32px;
	padding-left: 11px;
	font-size: 14px;
	line-height: 20px;
	letter-spacing: -.45px;
	color: #b4b4b4;
}

.installer-title svg {
	width: 22px;
	height: 22px;
}

.installer-title span {
	padding-bottom: 2px;
}

.slogan {
	margin: 413px 0 0 111px;
	font-size: 16px;
	line-height: 24px;
	letter-spacing: -.65px;
}

.state {
	margin: auto 0 9px 19px;
	font-size: 14px;
	line-height: 20px;
}

.progress {
	height: 3px;
	margin: 0 2px;
	background: #3a3a3a;
}

.done {
	width: 40%;
	height: 3px;
	background: #d9343d;
}

.watermark {
	position: absolute;
	left: 1039px;
	top: 607px;
	width: 194px;
	height: 64px;
	font: 53px "Liberation Sans", sans-serif;
	letter-spacing: 0;
	fill: #fff;
	opacity: .48;
	filter: drop-shadow(0 0 2px rgba(0, 0, 0, .4));
}

.watermark .outline {
	fill: none;
	stroke: #fff;
	stroke-width: 4;
	stroke-linejoin: round;
}

/* taskbar */
.taskbar {
	display: flex;
	height: 40px;
	background: linear-gradient(90deg, #001520, #001722 45%, #020b1b);
	color: #fff;
}

.start {
	display: flex;
	width: 48px;
	align-items: center;
	justify-content: center;
}

.start svg {
	width: 16px;
	height: 16px;
}

.searchbox {
	display: flex;
	align-items: center;
	width: 288px;
	padding-left: 12px;
	background: #f1f1f1;
	border: 1px solid #c4c9cc;
	border-right: 0;
	color: #333;
	font-size: 15px;
	letter-spacing: -.55px;
}

.lens {
	width: 17px;
	height: 17px;
	margin-right: 10px;
}

.flowers {
	width: 80px;
	height: 40px;
	margin-left: auto;
}

.task {
	display: flex;
	width: 49px;
	height: 40px;
	align-items: center;
	justify-content: center;
	padding-right: 2px;
}

.task.first {
	width: 51px;
	padding-right: 3px;
}

.task svg {
	width: 24px;
	height: 24px;
}

.task .tv {
	width: 16px;
	height: 16px;
}

.task.lit {
	width: 48px;
	margin-right: 1px;
	padding: 0;
	background: #9b5c2b;
	border-bottom: 2px solid #f56a10;
	border-top: 2px solid #9b5c2b;
}

.task.running {
	position: relative;
}

.task.running::after {
	content: "";
	position: absolute;
	left: 3px;
	bottom: 0;
	width: 40px;
	height: 2px;
	background: #76b4e2;
}

.tray {
	display: flex;
	align-items: center;
	margin-left: auto;
}

.tray svg {
	width: 16px;
	height: 16px;
	margin-right: 8px;
	fill: none;
	stroke: #fff;
}

.clock {
	width: 57px;
	text-align: center;
	line-height: 18px;
	margin-left: -1px;
	letter-spacing: -.5px;
}

.tray .note {
	width: 18px;
	height: 18px;
	margin: 0 19px 0 15px;
}

.tray i {
	width: 5px;
	height: 40px;
	border-left: 1px solid #46515e;
}
```
